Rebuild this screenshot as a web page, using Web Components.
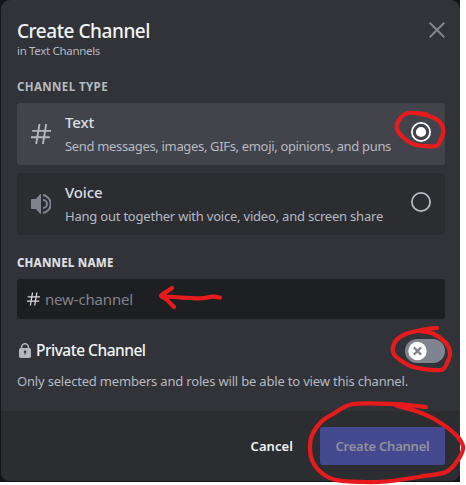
<!DOCTYPE html>
<html lang="en"><head><meta charset="utf-8"><title>Create Channel</title>
<style>
body{margin:0;background:#fff;font-family:"Noto Sans","Open Sans",sans-serif;overflow:hidden}
</style></head><body>
<channel-dialog></channel-dialog>
<script>
const define=(name,html,init)=>customElements.define(name,class extends HTMLElement{
  connectedCallback(){
    if(this.shadowRoot)return;
    const t=document.createElement('template');t.innerHTML=html;
    this.attachShadow({mode:'open'}).append(t.content.cloneNode(true));
    if(init)init.call(this,this.shadowRoot);
  }
});

/* One line of text spaced to the advance width given in "w". */
define('fit-text',`<style>:host{display:block;white-space:nowrap}span{display:inline-block}</style><span><slot></slot></span>`,function(r){
  const s=r.querySelector('span'),w=parseFloat(this.getAttribute('w'));
  const n=this.textContent.length;
  s.style.letterSpacing=((w-s.getBoundingClientRect().width)/n).toFixed(3)+'px';
});

define('hash-icon',`<style>:host{display:block;width:20px;height:20px}svg{display:block;width:100%;height:100%}</style>
<svg viewBox="0 0 20 20" fill="none" stroke="currentColor" stroke-width="1.9"><path d="M8.500 0 5.2 20M15.200 0 11.900 20M1.200 6.900H20M0 13.300H18.800"/></svg>`);

define('speaker-icon',`<style>:host{display:block;width:20px;height:20px}svg{display:block}</style>
<svg width="20" height="20" viewBox="0 0 20 20"><path fill="currentColor" d="M9.3.1 4.8 4.9H1Q0 4.9 0 5.9V14Q0 15 1 15H4.8L9.3 19.8Q10 20.3 10 19.4V.6Q10-.3 9.3.1Z"/><path fill="none" stroke="currentColor" stroke-width="2" d="M12 6A4 4 0 0 1 12 14M12 1.1A9 9 0 0 1 12 18.9"/></svg>`);

define('lock-icon',`<style>:host{display:block;width:12px;height:15px}svg{display:block}</style>
<svg width="12" height="15" viewBox="0 0 12 15"><path fill="none" stroke="currentColor" stroke-width="1.5" d="M2.6 6V4.100a3.4 3.4 0 0 1 6.8 0V6"/><rect y="5" width="12" height="10" rx="1.8" fill="currentColor"/><path fill="#313338" d="M6 7.600a1.200 1.200 0 0 1 .5 2.300V11.500H5.500V9.900A1.200 1.200 0 0 1 6 7.600Z"/></svg>`);

define('radio-dot',`<style>:host{display:block;width:20px;height:20px;color:#b5bac1}:host([checked]){color:#fff}circle.dot{display:none}:host([checked]) .dot{display:block}svg{display:block}</style>
<svg width="20" height="20" viewBox="0 0 20 20"><circle cx="10" cy="10" r="9.1" fill="none" stroke="currentColor" stroke-width="1.8"/><circle class="dot" cx="10" cy="10" r="5.1" fill="currentColor"/></svg>`);

define('toggle-switch',`<style>:host{display:block;width:40px;height:24px}svg{display:block}</style>
<svg width="40" height="24" viewBox="0 0 40 24"><rect width="40" height="24" rx="12" fill="#80848e"/><circle cx="12.5" cy="12" r="9.2" fill="#fff"/><path d="m8.9 8.4 7.2 7.2m0-7.2-7.2 7.2" stroke="#80848e" stroke-width="2.2"/></svg>`);

define('type-option',`<style>
:host{display:flex;box-sizing:border-box;height:62px;padding:0 14px;align-items:center;border-radius:3px;background:#2b2d31;color:#b5bac1}
:host([selected]){background:#43444b}
.icon{width:20px;margin-right:14px;color:#80848e}:host([selected]) .icon{color:#b5b7bb}
.copy{flex:1;display:grid;gap:4px;margin-top:-1px}
.title{font-size:15px;line-height:20px;font-weight:500;color:#dbdee1}.desc{font-size:13px;line-height:20px}
radio-dot,slot[name=radio]{margin-top:-4px;display:block}
</style><div class="icon"><slot name="icon"></slot></div><div class="copy"><div class="title"><slot name="title"></slot></div><div class="desc"><slot name="desc"></slot></div></div><slot name="radio"></slot>`);

/* Freehand red marker strokes laid over the dialog, each a smooth curve through its points. */
const strokes=[
 [426,114,408,113,399,120,397,129,405,139,416,145,436,146,441,139,443.500,131,440,122,434,118,426,115,419,114],
 [172,288,166,292,161,295.700,167,300,174,307],
 [161,296,180,297.500,200,298.300,213,296.700,220,297.700],
 [437,328,425,329.300,405,334.300,395,342,393,352,400,360,415,367.500,441,370,447.500,362,450,352,445,342,433,333.500,420,331],
 [426,407,396,404,353,404,333,414,321,422,311,438,311,457,320,471.500,336,480,363,482,386,481.500,420,476.700,446,472,458,460,463,447,456,435,436,420,416,411,396,405.500]];
define('marker-layer',`<style>:host{position:absolute;inset:0;pointer-events:none}svg{display:block}</style>
<svg width="466" height="485" viewBox="0 0 466 485" fill="none" stroke="#e81b1c" stroke-width="4.2" stroke-linecap="round" stroke-linejoin="round"><path/></svg>`,function(r){
  let d='';
  for(const s of strokes){
    const n=s.length/2,p=i=>{i=Math.max(0,Math.min(n-1,i));return[s[2*i],s[2*i+1]]};
    d+='M'+p(0);
    for(let i=0;i<n-1;i++){
      const[a,b,c,e]=[p(i-1),p(i),p(i+1),p(i+2)];
      d+='C'+[b[0]+(c[0]-a[0])/7,b[1]+(c[1]-a[1])/7,c[0]-(e[0]-b[0])/7,c[1]-(e[1]-b[1])/7,...c];
    }
  }
  r.querySelector('path').setAttribute('d',d);
});

define('channel-dialog',`<style>
:host{display:block;position:relative;width:466px;height:485px;overflow:hidden}
.back{width:460px;height:482px;background:#141518;padding-left:1px;box-sizing:border-box}
.panel{height:481px;box-sizing:border-box;display:flex;flex-direction:column;background:#313338;border-radius:9px;overflow:hidden}
.body{height:411px;box-sizing:border-box;padding:20px 15px 0 16px}
header{display:flex;justify-content:space-between;height:58px}
.h{font-size:19px;line-height:22px;font-weight:500;color:#f2f3f5}.sub{font-size:11.500px;line-height:17px;color:#b5bac1}
.close{margin-top:2px}
.label{font-size:11.5px;line-height:18px;font-weight:700;color:#b5bac1}.label.n{color:#dbdee1;margin-top:19px;font-weight:800}
.types{display:grid;gap:8px;margin-top:7px}
.field{display:flex;align-items:center;height:40px;margin-top:7px;border-radius:3px;background:#1e1f22;padding-left:10px;gap:5px;color:#dbdee1}
.field hash-icon{width:13px;height:14px}.ph{font-size:15px;color:#80838a}
.private{display:flex;align-items:center;margin-top:20px;height:24px;gap:5px}
.private lock-icon{color:#b5b7bb;margin:-2px 0 0 2px}.pt{flex:1;font-size:15.500px;line-height:20px;margin-top:-2px;font-weight:500;color:#f2f3f5}
.note{font-size:13px;line-height:20px;margin-top:8px;color:#b5bac1}
footer{flex:1;display:flex;align-items:center;justify-content:flex-end;background:#2b2d31;padding-right:15px;gap:27px;font-size:13px;font-weight:600;color:#f2f3f5}
.btn{width:125px;height:38px;border-radius:3px;background:#444990;color:#909198;display:grid;place-items:center}
</style>
<div class="back"><div class="panel"><div class="body">
<header><div><fit-text class="h" w="133">Create Channel</fit-text><fit-text class="sub" w="83">in Text Channels</fit-text></div>
<svg class="close" width="16" height="16" viewBox="0 0 16 16" stroke="#82858b" stroke-width="2"><path d="m.7.7 14.600 14.600m0-14.600L.7 15.300"/></svg></header>
<fit-text class="label" w="91">CHANNEL TYPE</fit-text>
<div class="types">
<type-option selected><hash-icon slot="icon"></hash-icon><fit-text slot="title" w="29">Text</fit-text><fit-text slot="desc" w="326">Send messages, images, GIFs, emoji, opinions, and puns</fit-text><radio-dot checked slot="radio"></radio-dot></type-option>
<type-option><speaker-icon slot="icon"></speaker-icon><fit-text slot="title" w="37.500">Voice</fit-text><fit-text slot="desc" w="318">Hang out together with voice, video, and screen share</fit-text><radio-dot slot="radio"></radio-dot></type-option>
</div>
<fit-text class="label n" w="96.500">CHANNEL NAME</fit-text>
<div class="field"><hash-icon></hash-icon><fit-text class="ph" w="88">new-channel</fit-text></div>
<div class="private"><lock-icon></lock-icon><fit-text class="pt" w="109.500">Private Channel</fit-text><toggle-switch></toggle-switch></div>
<fit-text class="note" w="391">Only selected members and roles will be able to view this channel.</fit-text>
</div><footer><fit-text w="42.500">Cancel</fit-text><div class="btn"><fit-text w="94">Create Channel</fit-text></div></footer></div></div>
<marker-layer></marker-layer>`);
</script></body></html>
